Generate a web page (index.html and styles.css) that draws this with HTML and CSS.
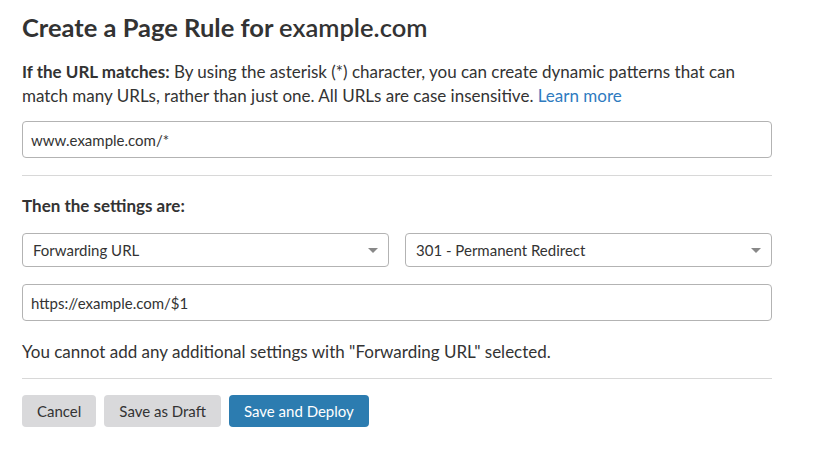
FILE: index.html
```html
<!DOCTYPE html>
<html lang="en">
<head>
    <meta charset="UTF-8">
    <title>Create a Page Rule</title>
    <link rel="stylesheet" href="styles.css">
</head>
<body>
    <div class="page-rule">
        <h1>Create a Page Rule for <span class="domain">example.com</span></h1>

        <p class="intro">
            <strong>If the URL matches:</strong> By using the asterisk (*) character, you can create dynamic patterns that can
            match many URLs, rather than just one. All URLs are case insensitive. <a href="#">Learn more</a>
        </p>

        <div class="field url-field">www.example.com/*</div>

        <hr>

        <h2>Then the settings are:</h2>

        <div class="select-row">
            <div class="select">
                <span>Forwarding URL</span>
                <span class="caret"></span>
            </div>
            <div class="select">
                <span>301 - Permanent Redirect</span>
                <span class="caret"></span>
            </div>
        </div>

        <div class="field dest-field">https://example.com/$1</div>

        <p class="note">You cannot add any additional settings with "Forwarding URL" selected.</p>

        <hr>

        <div class="actions">
            <button class="btn">Cancel</button>
            <button class="btn">Save as Draft</button>
            <button class="btn btn-primary">Save and Deploy</button>
        </div>
    </div>
</body>
</html>
```

FILE: styles.css
```css
* {
    margin: 0;
    padding: 0;
    box-sizing: border-box;
}

body {
    font-family: Lato, "Open Sans", sans-serif;
    background-color: #fff;
    color: #333;
    font-size: 17px;
}

.page-rule {
    width: 750px;
    margin-left: 22px;
    padding-top: 11px;
}

h1 {
    font-size: 25.5px;
    font-weight: bold;
    line-height: 32px;
    color: #333;
}

h1 .domain {
    font-weight: 600;
}

.intro {
    margin-top: 17px;
    line-height: 24px;
}

.intro strong,
.intro a {
    line-height: 20px;
}

.intro a {
    color: #2f7bbf;
    text-decoration: none;
}

.field {
    border: 1px solid #b3b3b3;
    border-radius: 4px;
    padding: 0 8px;
    font-size: 15px;
    display: flex;
    align-items: center;
}

.url-field {
    margin-top: 13px;
    height: 37px;
}

hr {
    border: none;
    border-top: 1px solid #d8d8d8;
}

.url-field + hr {
    margin-top: 17px;
}

h2 {
    font-size: 17px;
    font-weight: bold;
    margin-top: 19px;
    line-height: 22px;
}

.select-row {
    display: flex;
    gap: 16px;
    margin-top: 16px;
}

.select {
    flex: 1;
    height: 34px;
    border: 1px solid #b3b3b3;
    border-radius: 4px;
    padding: 0 10px;
    font-size: 15px;
    display: flex;
    align-items: center;
    justify-content: space-between;
}

.caret {
    width: 0;
    height: 0;
    border-left: 5px solid transparent;
    border-right: 5px solid transparent;
    border-top: 5px solid #888;
}

.dest-field {
    margin-top: 17px;
    height: 37px;
}

.note {
    margin-top: 20px;
    line-height: 22px;
}

.note + hr {
    margin-top: 15px;
}

.actions {
    display: flex;
    gap: 8px;
    margin-top: 16px;
}

.btn {
    height: 32px;
    padding: 0 15px;
    border: none;
    border-radius: 4px;
    background-color: #d9d9db;
    color: #333;
    font-family: inherit;
    font-size: 15px;
    cursor: pointer;
}

.btn-primary {
    background-color: #2c7cb0;
    color: #fff;
}
```
